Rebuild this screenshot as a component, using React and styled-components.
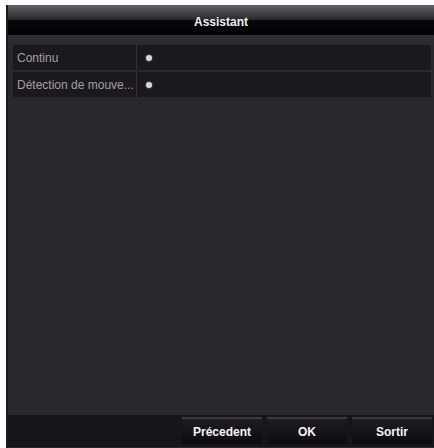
import React from "react";
import styled, { createGlobalStyle } from "styled-components";

const Global = createGlobalStyle`
  html, body { margin: 0; padding: 0; background: #ffffff; }
  body { font-family: "Liberation Sans", Arial, sans-serif; }
`;

const Page = styled.div`
  width: 434px;
  height: 448px;
  box-sizing: border-box;
  padding: 5px 0 0 6px;
  overflow: hidden;
`;

const Dialog = styled.div`
  height: 443px;
  display: flex;
  flex-direction: column;
  background: #2a282c;
  border-left: 2px solid #1c1a1e;
  box-sizing: border-box;
`;

const TitleBar = styled.div`
  height: 30px;
  flex: none;
  display: flex;
  align-items: center;
  justify-content: center;
  background: linear-gradient(
    to bottom,
    #636266 0%,
    #45444a 25%,
    #2b2a2f 48%,
    #060508 52%,
    #030204 100%
  );
  color: #f2f2f2;
  font-size: 12px;
  font-weight: bold;
  padding-top: 4px;
  box-sizing: border-box;
`;

const Content = styled.div`
  flex: 1;
  padding: 10px 3px 0 5px;
  display: flex;
  flex-direction: column;
  gap: 2px;
  background: linear-gradient(to bottom, #302e33 0px, #2a282c 14px, #2a282c 100%);
`;

const Row = styled.div`
  height: 25px;
  display: grid;
  grid-template-columns: 124px 1fr;
  background: #1b191d;
`;

const Label = styled.div`
  display: flex;
  align-items: center;
  padding-left: 4px;
  color: #a2a0a4;
  font-size: 12px;
  border-right: 1px solid #333136;
  white-space: nowrap;
  overflow: hidden;
`;

const Value = styled.div`
  display: flex;
  align-items: center;
  padding-left: 9px;
`;

const Dot = styled.span`
  width: 6px;
  height: 6px;
  border-radius: 50%;
  background: #d8d8d8;
  box-shadow: 0 0 2px rgba(255, 255, 255, 0.5);
`;

const Footer = styled.div`
  height: 33px;
  flex: none;
  display: flex;
  justify-content: flex-end;
  align-items: flex-end;
  gap: 5px;
  padding: 0 2px 3px 0;
  background: #17151a;
  border-bottom: 1px solid #2c2a2e;
  box-sizing: border-box;
`;

const Button = styled.button`
  width: 80px;
  height: 27px;
  border: none;
  border-top: 2px solid #3c3a3f;
  background: linear-gradient(to bottom, #1f1d22 0%, #0c0b0e 100%);
  color: #f4f4f4;
  font-family: "Liberation Sans", Arial, sans-serif;
  font-size: 12px;
  font-weight: bold;
  padding: 0;
  cursor: pointer;
`;

const rows = ["Continu", "Détection de mouve..."];

export default function App() {
  return (
    <>
      <Global />
      <Page>
        <Dialog>
          <TitleBar>Assistant</TitleBar>
          <Content>
            {rows.map((r) => (
              <Row key={r}>
                <Label>{r}</Label>
                <Value>
                  <Dot />
                </Value>
              </Row>
            ))}
          </Content>
          <Footer>
            <Button>Précedent</Button>
            <Button>OK</Button>
            <Button>Sortir</Button>
          </Footer>
        </Dialog>
      </Page>
    </>
  );
}
